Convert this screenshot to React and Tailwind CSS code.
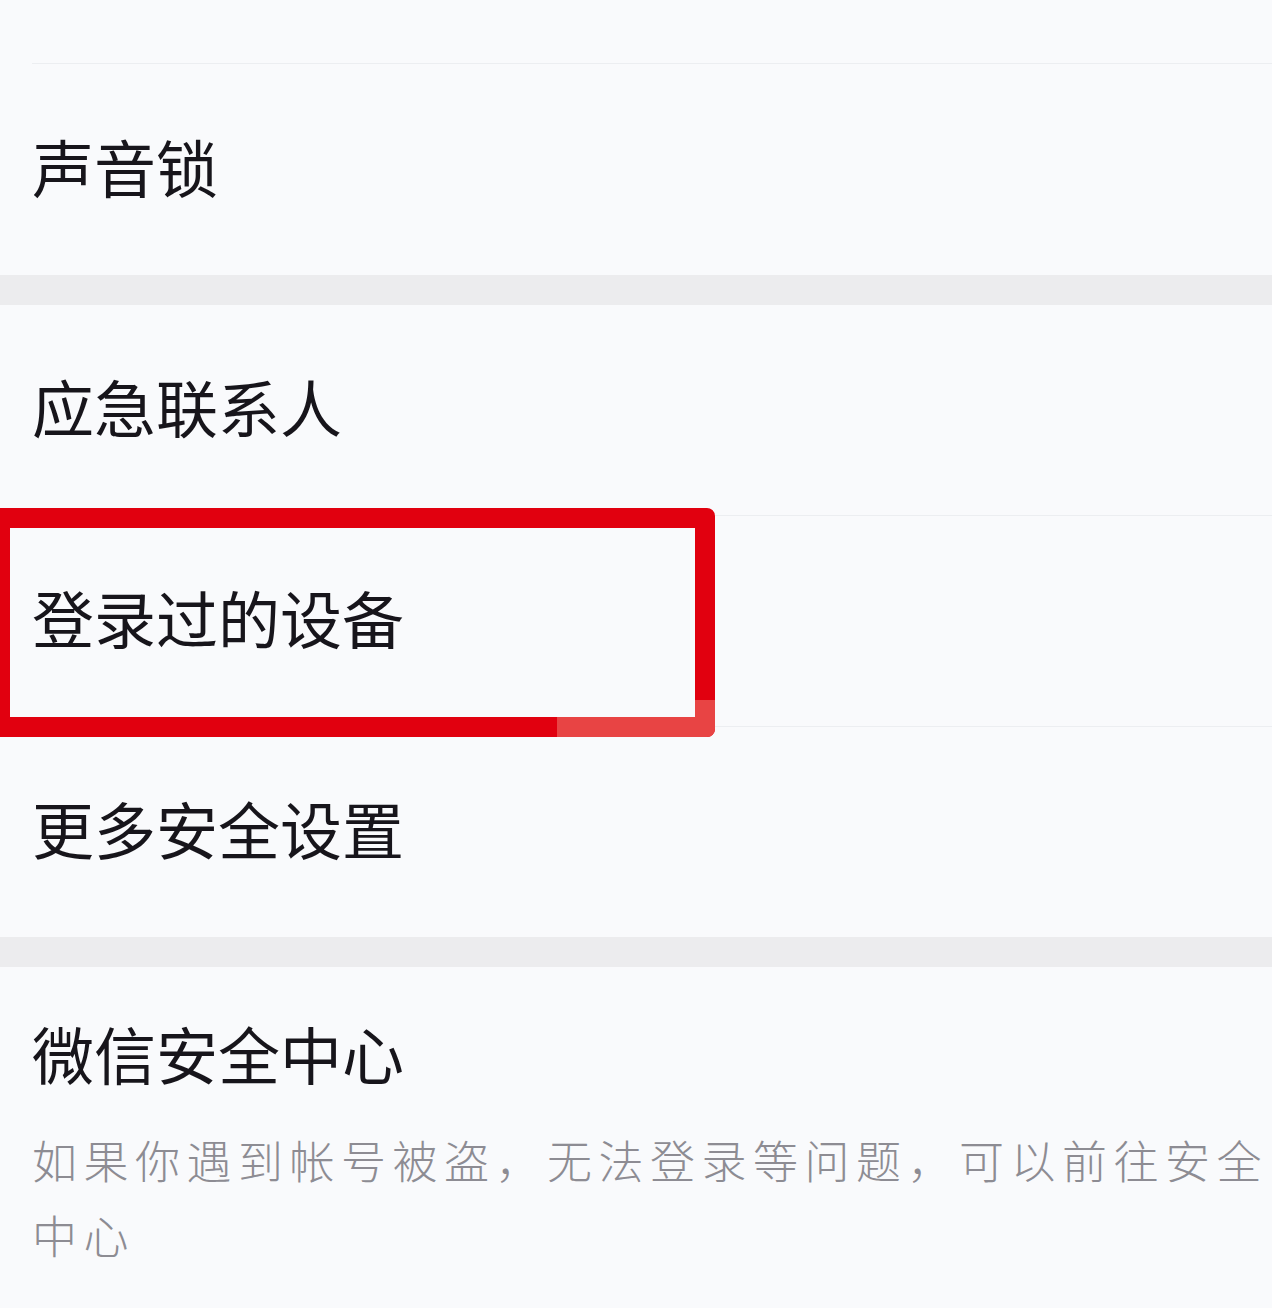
const font = { fontFamily: '"Noto Sans CJK SC", "Noto Sans", sans-serif' };

function Row({ label }) {
  return (
    <div className="h-[210px] flex items-center pl-[32px] pb-[8px]">
      <span className="text-[62px] leading-none text-[#17151b]">{label}</span>
    </div>
  );
}

function Divider() {
  return <div className="h-px ml-[32px] bg-[#eceef1]" />;
}

function Band() {
  return <div className="h-[30px] bg-[#ececee]" />;
}

export default function App() {
  return (
    <div
      className="relative w-[1272px] h-[1308px] overflow-hidden bg-[#f9fafc]"
      style={font}
    >
      {/* top tail of previous row */}
      <div className="h-[63px]" />
      <Divider />

      <div className="h-[211px] flex items-center pl-[32px] pb-[8px]">
        <span className="text-[62px] leading-none text-[#17151b]">声音锁</span>
      </div>

      <Band />

      <Row label="应急联系人" />
      <Divider />
      <Row label="登录过的设备" />
      <Divider />
      <Row label="更多安全设置" />

      <Band />

      {/* security center */}
      <div className="pl-[32px] pt-[46px]">
        <div className="text-[62px] leading-[80px] text-[#17151b]">微信安全中心</div>
        <p className="mt-[29px] w-[1240px] text-[45px] leading-[75px] tracking-[6.5px] font-light text-[#8d8c93]">
          如果你遇到帐号被盗，无法登录等问题，可以前往安全中心
        </p>
      </div>

      {/* highlight frame */}
      <div className="absolute left-[-10px] top-[508px] w-[725px] h-[229px] border-[20px] border-[#e1000f] rounded-[8px]" />
      <div className="absolute left-[557px] top-[717px] w-[158px] h-[20px] bg-[#e84444] rounded-br-[8px]" />
      <div className="absolute left-[695px] top-[700px] w-[20px] h-[17px] bg-[#e84444]" />
    </div>
  );
}
